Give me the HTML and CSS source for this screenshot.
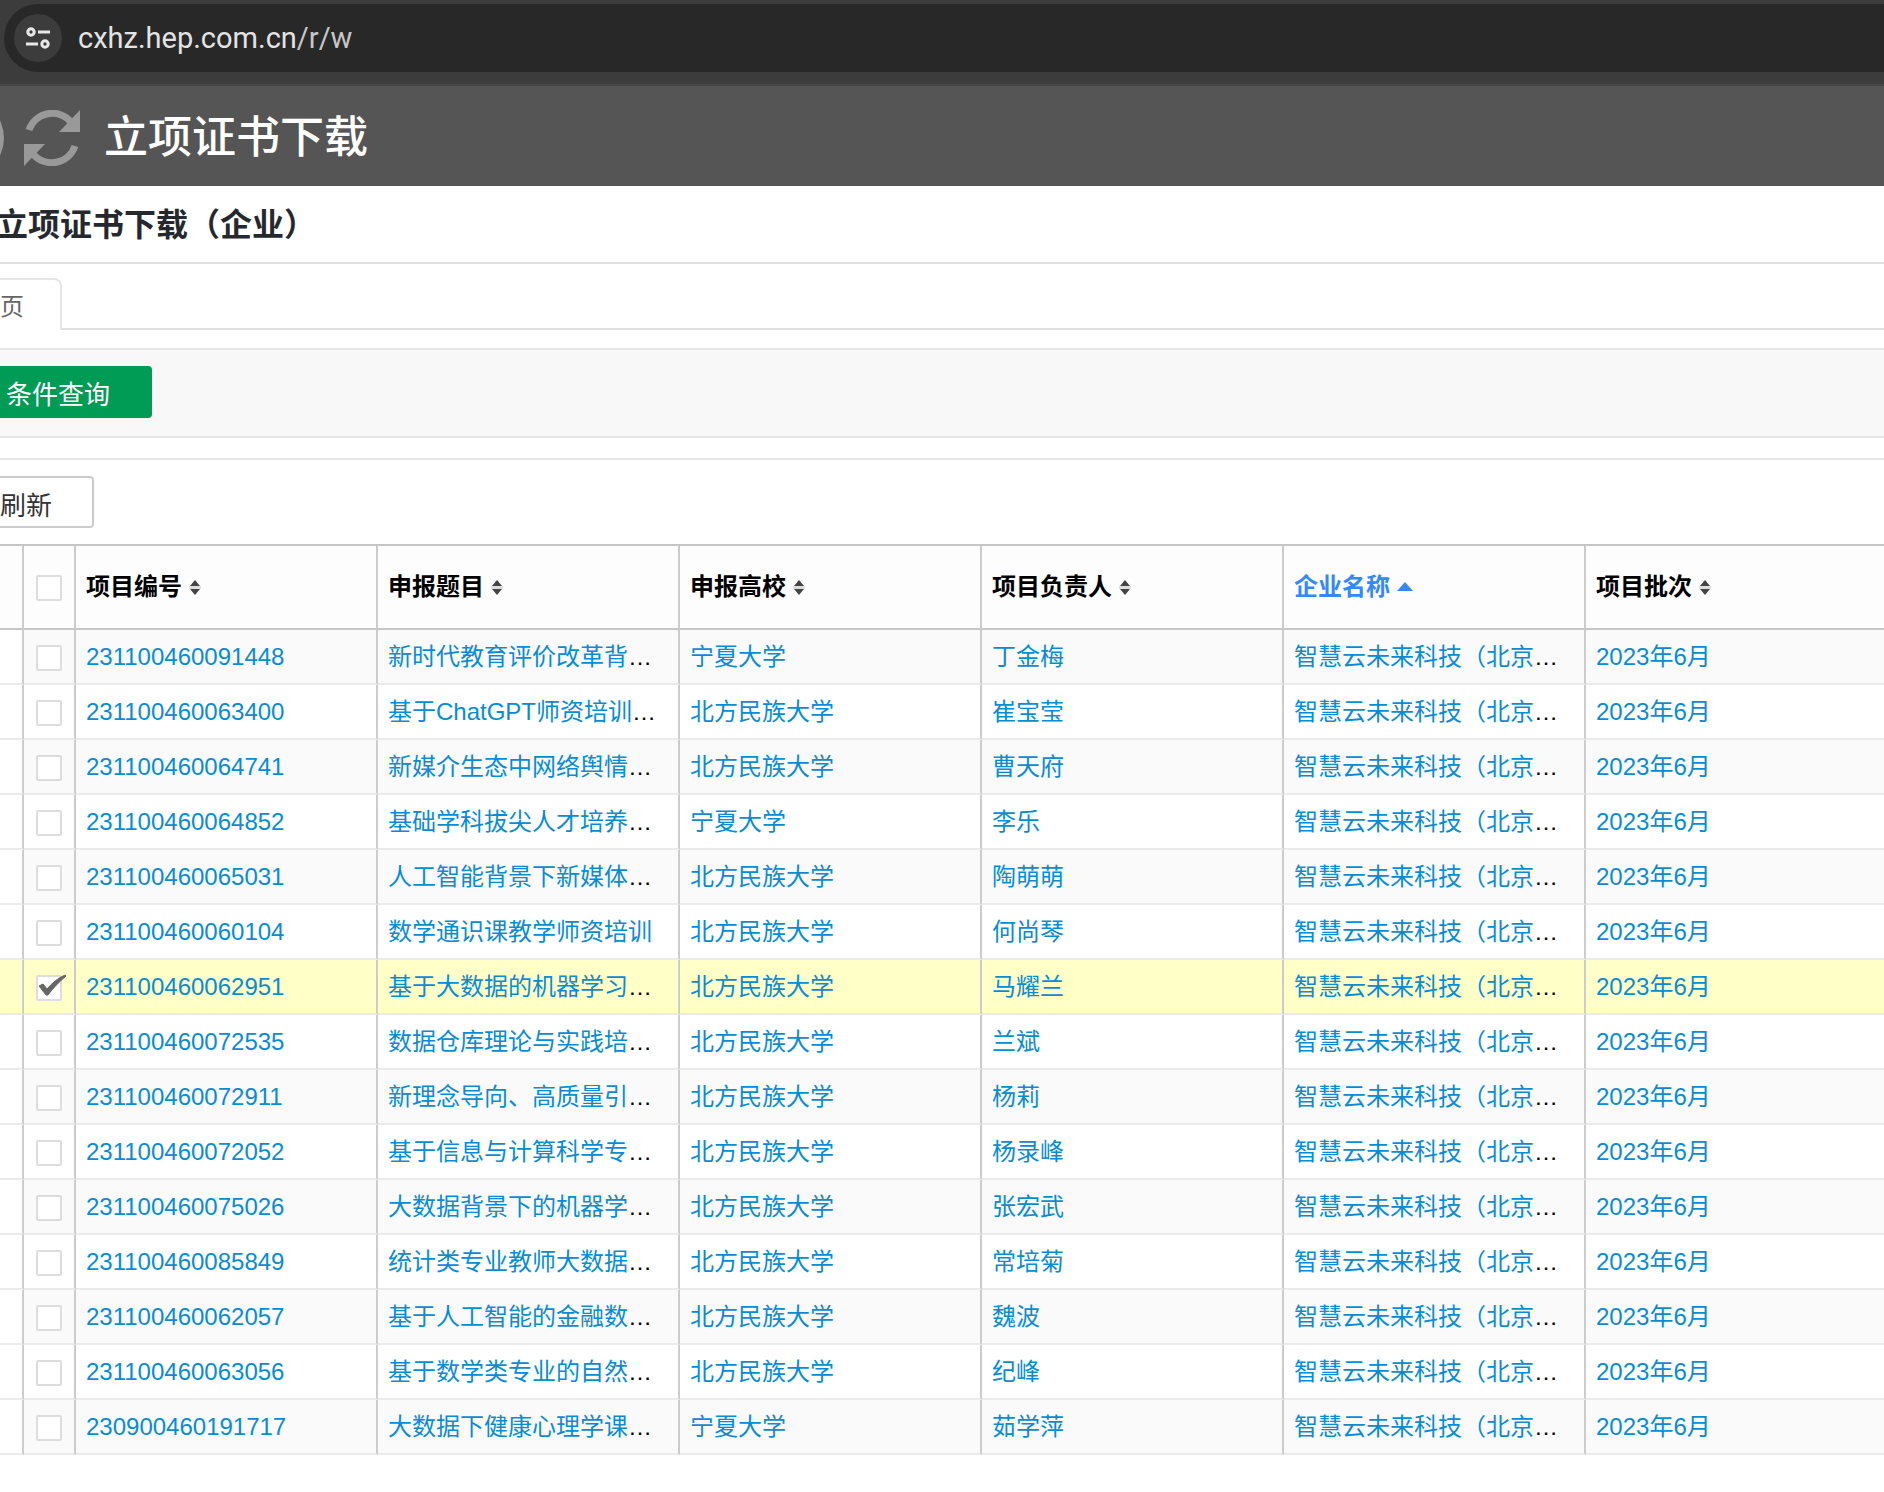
FILE: index.html
```html
<!DOCTYPE html>
<html lang="zh-CN">
<head>
<meta charset="utf-8">
<title>立项证书下载</title>
<link rel="stylesheet" href="styles.css">
</head>
<body>
<svg class="defs" width="0" height="0" aria-hidden="true">
  <symbol id="sort" viewBox="0 0 12 16"><path d="M6 1 11 7H1z" fill="#444"/><path d="M1 10h10l-5 6z" fill="#444"/><path d="M0 7h12v3H0z" fill="#ddd"/></symbol>
  <symbol id="asc" viewBox="0 0 16 16"><path d="M8 3 16 12H0z" fill="#3388ff"/></symbol>
</svg>
<div class="browser-bar">
  <div class="omnibox">
    <button class="site-info" type="button" aria-label="网站信息">
      <svg width="24" height="24" viewBox="0 0 24 24" fill="none" stroke="#e8e8e8" stroke-width="3"><circle cx="5" cy="6" r="3.2"/><path d="M12 6h12M0 18h12"/><circle cx="19" cy="18" r="3.2"/></svg>
    </button>
    <span class="url">cxhz.hep.com.cn<span class="path">/r/w</span></span>
  </div>
</div>
<header class="app-bar">
  <svg class="back-edge" width="4" height="56" viewBox="0 0 4 56" aria-hidden="true"><circle cx="-36" cy="28" r="40" fill="#999"/></svg>
  <button class="reload" type="button" aria-label="刷新页面">
    <svg width="56" height="56" viewBox="0 0 56 56" fill="#999"><g id="half"><path d="M5 20A24.5 24.5 0 0 1 47 12" fill="none" stroke="#999" stroke-width="7"/><path d="M56 0V22H35z"/></g><use href="#half" transform="rotate(180 28 28)"/></svg>
  </button>
  <h1>立项证书下载</h1>
</header>
<main>
  <h2 class="page-title">立项证书下载（企业）</h2>
  <nav class="tabs"><a class="tab" href="#">页</a></nav>
  <section class="query"><button class="btn primary" type="button">条件查询</button></section>
  <section class="list">
    <div class="toolbar"><button class="btn plain" type="button">刷新</button></div>
    <table>
      <colgroup><col class="c-gutter"><col class="c-check"><col class="c-data"><col class="c-data"><col class="c-data"><col class="c-data"><col class="c-data"><col></colgroup>
      <thead><tr>
        <th></th>
        <th class="pick"><input type="checkbox" aria-label="全选"></th>
        <th><button class="sort" type="button">项目编号<svg class="arrow"><use href="#sort"/></svg></button></th>
        <th><button class="sort" type="button">申报题目<svg class="arrow"><use href="#sort"/></svg></button></th>
        <th><button class="sort" type="button">申报高校<svg class="arrow"><use href="#sort"/></svg></button></th>
        <th><button class="sort" type="button">项目负责人<svg class="arrow"><use href="#sort"/></svg></button></th>
        <th><button class="sort active" type="button">企业名称<svg class="arrow wide"><use href="#asc"/></svg></button></th>
        <th><button class="sort" type="button">项目批次<svg class="arrow"><use href="#sort"/></svg></button></th>
      </tr></thead>
      <tbody id="rows"></tbody>
    </table>
  </section>
</main>
<script src="rows.js"></script>
</body>
</html>
```
FILE: styles.css
```css
* { box-sizing: border-box; }
body {
  margin: 0;
  background: #fff;
  color: #000;
  font-family: "Liberation Sans", "Noto Sans CJK SC", sans-serif;
  font-size: 24px;
  overflow-x: hidden;
}
button { font: inherit; border: 0; padding: 0; margin: 0; background: none; color: inherit; }
a { color: #088cd4; text-decoration: none; }
.defs { display: none; }

.browser-bar {
  height: 86px;
  padding: 4px 0 0 4px;
  background: #3c3c3c;
  border-bottom: 2px solid #474747;
}
.omnibox {
  display: flex;
  align-items: center;
  gap: 16px;
  height: 68px;
  padding-left: 10px;
  background: #282828;
  border-radius: 34px 0 0 34px;
}
.site-info {
  display: flex;
  align-items: center;
  justify-content: center;
  width: 48px;
  height: 48px;
  border-radius: 50%;
  background: #3c3c3c;
}
.url { font-family: Roboto, sans-serif; font-size: 29px; color: #e3e3e3; }
.path { color: #c7c7c7; }

.app-bar { display: flex; align-items: center; height: 100px; padding-top: 4px; background: #555; color: #fff; }
.back-edge { margin-right: 20px; }
.reload { display: flex; margin-right: 24px; }
.app-bar h1 { margin: 0; font-size: 44px; font-weight: 500; line-height: 56px; }

.page-title {
  margin: 0 0 14px -4px;
  height: 78px;
  font-size: 32px;
  line-height: 78px;
  color: #25282d;
  border-bottom: 2px solid #e0e0e0;
}
.tabs { display: flex; margin-bottom: 18px; }
.tabs::after { content: ""; flex: 1; border-bottom: 2px solid #e0e0e0; }
.tab {
  width: 62px;
  height: 52px;
  border: 2px solid #e6e6e6;
  border-width: 2px 2px 0 0;
  border-top-right-radius: 8px;
  line-height: 54px;
  color: #666;
}
.query {
  padding: 16px 0 18px;
  margin-bottom: 20px;
  background: #f8f8f8;
  border: 2px solid #e4e4e4;
  border-width: 2px 0;
}
.btn { display: block; height: 52px; font-size: 26px; text-align: left; }
.primary { width: 152px; padding-left: 6px; background: #009b55; color: #fff; border-radius: 0 4px 4px 0; }
.plain { width: 94px; padding-top: 2px; color: #333; border: 2px solid #ccc; border-left: 0; border-radius: 0 4px 4px 0; }
.list { border-top: 2px solid #e6e6e6; }
.toolbar { padding: 16px 0; }

table { width: 100%; table-layout: fixed; border-collapse: separate; border-spacing: 0; border-top: 2px solid #c6c6c6; }
.c-gutter { width: 24px; }
.c-check { width: 52px; }
.c-data { width: 302px; }
th, td {
  padding: 0 10px;
  text-align: left;
  white-space: nowrap;
  border-right: 2px solid #ccc;
}
th:last-child, td:last-child { border-right: 0; }
th { height: 84px; background: #fdfdfd; border-bottom: 2px solid #c6c6c6; }
td { height: 55px; line-height: 34px; border-bottom: 2px solid #ebebeb; }
tbody tr:nth-child(odd) td:not(:first-child) { background: #fafafa; }
tbody tr.selected td, tbody tr.selected td:not(:first-child) { background: #ffffc8; }
.pick { padding: 2px 12px 0; }
.pick input {
  appearance: none;
  display: block;
  width: 26px;
  height: 26px;
  margin: 0;
  background: #fff;
  border: 2px solid #ddd;
  border-radius: 2px;
}
.tick { position: relative; }
.tick svg { position: absolute; left: 3px; top: -1px; pointer-events: none; }
.sort { display: flex; align-items: center; gap: 7px; font-weight: 700; line-height: 32px; }
.active { color: #3388ff; }
.arrow { width: 12px; height: 16px; }
.wide { width: 16px; }
```
FILE: rows.js
```js
const rows = [
  ["231100460091448", "新时代教育评价改革背…", "宁夏大学", "丁金梅"],
  ["231100460063400", "基于ChatGPT师资培训…", "北方民族大学", "崔宝莹"],
  ["231100460064741", "新媒介生态中网络舆情…", "北方民族大学", "曹天府"],
  ["231100460064852", "基础学科拔尖人才培养…", "宁夏大学", "李乐"],
  ["231100460065031", "人工智能背景下新媒体…", "北方民族大学", "陶萌萌"],
  ["231100460060104", "数学通识课教学师资培训", "北方民族大学", "何尚琴"],
  ["231100460062951", "基于大数据的机器学习…", "北方民族大学", "马耀兰"],
  ["231100460072535", "数据仓库理论与实践培…", "北方民族大学", "兰斌"],
  ["231100460072911", "新理念导向、高质量引…", "北方民族大学", "杨莉"],
  ["231100460072052", "基于信息与计算科学专…", "北方民族大学", "杨录峰"],
  ["231100460075026", "大数据背景下的机器学…", "北方民族大学", "张宏武"],
  ["231100460085849", "统计类专业教师大数据…", "北方民族大学", "常培菊"],
  ["231100460062057", "基于人工智能的金融数…", "北方民族大学", "魏波"],
  ["231100460063056", "基于数学类专业的自然…", "北方民族大学", "纪峰"],
  ["230900460191717", "大数据下健康心理学课…", "宁夏大学", "茹学萍"]
];
const selected = "231100460062951";
const mark = '<svg width="28" height="24" viewBox="0 0 28 24" aria-hidden="true"><path d="M0 12 4 10 8 15C13 9 19 4 26 1L27 2C20 8 14 14 9 21H7z" fill="#666" stroke="#666"/></svg>';

// The ellipsis of a shortened text stays outside the link.
const link = text => {
  const short = text.endsWith("…");
  return `<td><a href="#">${short ? text.slice(0, -1) : text}</a>${short ? "…" : ""}</td>`;
};

document.getElementById("rows").innerHTML = rows.map(r => {
  const on = r[0] === selected;
  const cells = [...r, "智慧云未来科技（北京…", "2023年6月"];
  return `<tr${on ? ' class="selected"' : ""}><td></td>` +
    `<td class="pick"><div class="tick"><input type="checkbox" aria-label="${r[0]}"${on ? " checked" : ""}>${on ? mark : ""}</div></td>` +
    cells.map(link).join("") + "</tr>";
}).join("");
```
